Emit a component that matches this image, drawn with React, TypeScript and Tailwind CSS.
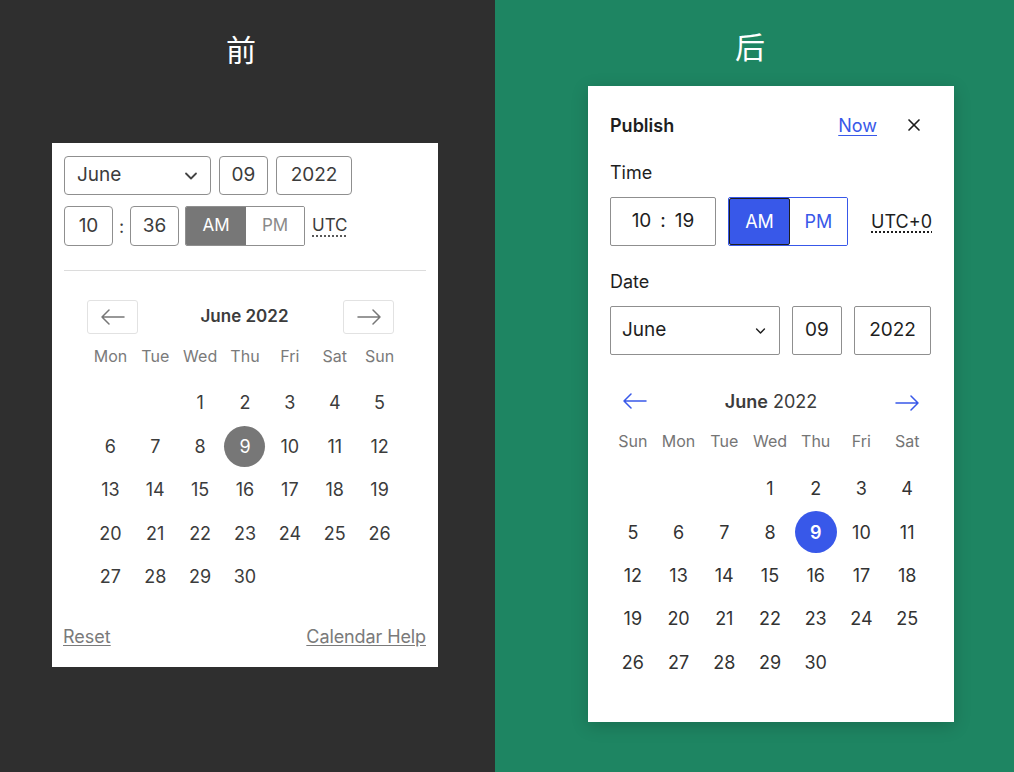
import React from 'react';
import { X } from 'lucide-react';

const leftWeek = ['Mon', 'Tue', 'Wed', 'Thu', 'Fri', 'Sat', 'Sun'];
const rightWeek = ['Sun', 'Mon', 'Tue', 'Wed', 'Thu', 'Fri', 'Sat'];

function cells(offset: number) {
  const out: (number | null)[] = [];
  for (let i = 0; i < offset; i++) out.push(null);
  for (let d = 1; d <= 30; d++) out.push(d);
  return out;
}

function Arrow({ dir, className }: { dir: 'left' | 'right'; className?: string }) {
  return (
    <svg width="26" height="16" viewBox="0 0 26 16" fill="none" className={className}>
      {dir === 'left' ? (
        <path d="M24 8H2M9 1L2 8l7 7" stroke="currentColor" strokeWidth="1.5" strokeLinecap="round" strokeLinejoin="round" />
      ) : (
        <path d="M2 8h22M17 1l7 7-7 7" stroke="currentColor" strokeWidth="1.5" strokeLinecap="round" strokeLinejoin="round" />
      )}
    </svg>
  );
}

function Chevron({ className }: { className?: string }) {
  return (
    <svg width="14" height="10" viewBox="0 0 14 10" fill="none" className={className}>
      <path d="M2 2.5l5 5 5-5" stroke="currentColor" strokeWidth="1.8" strokeLinecap="round" strokeLinejoin="round" />
    </svg>
  );
}

function OldPicker() {
  const days = cells(2);
  return (
    <div className="ml-[52px] mt-[73px] w-[386px] h-[524px] bg-white px-3 pt-3 flex flex-col text-[#3c3c3c]">
      <div className="flex gap-2 h-10 pt-px">
        <div className="w-[147px] border border-[#8f8f8f] rounded-[4px] flex items-center justify-between pl-3 pr-3 text-[19px]">
          <span>June</span>
          <Chevron className="text-[#444]" />
        </div>
        <div className="w-[49px] border border-[#8f8f8f] rounded-[4px] flex items-center justify-center text-[19px]">09</div>
        <div className="w-[76px] border border-[#8f8f8f] rounded-[4px] flex items-center justify-center text-[19px]">2022</div>
      </div>
      <div className="flex items-center h-10 mt-[11px]">
        <div className="w-[49px] h-10 border border-[#8f8f8f] rounded-[4px] flex items-center justify-center text-[19px] pt-px">10</div>
        <span className="w-[17px] text-center text-[18px]">:</span>
        <div className="w-[49px] h-10 border border-[#8f8f8f] rounded-[4px] flex items-center justify-center text-[19px] pt-px">36</div>
        <div className="ml-[6px] flex h-10 border border-[#8f8f8f] rounded-[2px] overflow-hidden text-[17px]">
          <div className="w-[60px] bg-[#777777] text-white flex items-center justify-center">AM</div>
          <div className="w-[58px] bg-white text-[#8a8a8a] flex items-center justify-center">PM</div>
        </div>
        <span className="ml-[7px] text-[17px] underline decoration-dotted underline-offset-4">UTC</span>
      </div>
      <div className="mt-6 h-px bg-[#dcdcdc]" />
      <div className="ml-[24px] w-[314px] mt-[29px]">
        <div className="flex items-center h-[34px]">
          <div className="w-[51px] h-[34px] -ml-px border border-[#e2e2e2] rounded-[3px] flex items-center justify-center text-[#777]">
            <Arrow dir="left" />
          </div>
          <span className="flex-1 pl-[8px] text-center font-semibold text-[17px] text-[#3c3c3c]">June 2022</span>
          <div className="w-[51px] h-[34px] border border-[#e2e2e2] rounded-[3px] flex items-center justify-center text-[#777] mr-[8px]">
            <Arrow dir="right" />
          </div>
        </div>
        <div className="grid grid-cols-7 mt-[10px] h-6 items-center text-[16px] text-[#7a7a7a]">
          {leftWeek.map(w => (
            <div key={w} className="text-center">{w}</div>
          ))}
        </div>
        <div className="grid grid-cols-7 mt-[13px] text-[18px]">
          {days.map((d, i) => (
            <div key={i} className="h-[43.5px] flex items-center justify-center">
              {d === 9 ? (
                <span className="w-[41px] h-[41px] rounded-full bg-[#777777] text-white flex items-center justify-center">9</span>
              ) : (
                d
              )}
            </div>
          ))}
        </div>
      </div>
      <div className="mt-auto mb-[17px] flex justify-between text-[18px] text-[#7a7a7a] leading-[26px] -ml-px">
        <span className="underline underline-offset-2">Reset</span>
        <span className="underline underline-offset-2 tracking-[-0.1px]">Calendar Help</span>
      </div>
    </div>
  );
}

function NewPicker() {
  const days = cells(3);
  return (
    <div className="ml-[93px] mt-[19px] w-[366px] h-[636px] bg-white px-[22px] pt-6 shadow-[0_4px_16px_rgba(0,0,0,0.18)] text-[#1e1e1e]">
      <div className="flex items-center h-[30px]">
        <span className="font-semibold text-[18px] flex-1">Publish</span>
        <span className="text-[18px] text-[#3858e9] underline underline-offset-[3px] mr-[27px]">Now</span>
        <X size={20} strokeWidth={2} className="mr-[8px]" />
      </div>
      <div className="mt-[21px] h-6 leading-6 text-[18px]">Time</div>
      <div className="mt-3 flex items-center h-[49px]">
        <div className="w-[106px] h-[49px] border border-[#8f8f8f] rounded-[2px] flex items-center justify-center text-[19px] gap-[9px]">
          <span>10</span><span>:</span><span>19</span>
        </div>
        <div className="ml-3 flex h-[49px] border border-[#3858e9] rounded-[2px] overflow-hidden text-[18px]">
          <div className="w-[61px] bg-[#3858e9] text-white flex items-center justify-center border border-[#1e1e1e] rounded-[2px]">AM</div>
          <div className="w-[57px] bg-white text-[#3858e9] flex items-center justify-center">PM</div>
        </div>
        <span className="ml-auto text-[18px] underline decoration-dotted underline-offset-4">UTC+0</span>
      </div>
      <div className="mt-6 h-6 leading-6 text-[18px]">Date</div>
      <div className="mt-3 flex gap-3 h-[49px] text-[19px]">
        <div className="w-[170px] border border-[#8f8f8f] rounded-[2px] flex items-center justify-between pl-[11px] pr-[13px]">
          <span>June</span>
          <Chevron className="w-[11px] h-[8px]" />
        </div>
        <div className="w-[50px] border border-[#8f8f8f] rounded-[2px] flex items-center justify-center">09</div>
        <div className="w-[77px] border border-[#8f8f8f] rounded-[2px] flex items-center justify-center">2022</div>
      </div>
      <div className="mt-[30px] flex items-center justify-between h-8 px-[12px]">
        <Arrow dir="left" className="text-[#3858e9]" />
        <span className="text-[18px] text-[#3c3c3c]"><span className="font-semibold">June</span> 2022</span>
        <Arrow dir="right" className="text-[#3858e9] translate-y-[2px]" />
      </div>
      <div className="grid grid-cols-7 mt-[12px] h-6 items-center text-[16px] text-[#757575] pr-[2px]">
        {rightWeek.map(w => (
          <div key={w} className="text-center">{w}</div>
        ))}
      </div>
      <div className="grid grid-cols-7 mt-[14px] text-[18px] text-[#333] pr-[2px]">
        {days.map((d, i) => (
          <div key={i} className="h-[43.4px] flex items-center justify-center">
            {d === 9 ? (
              <span className="w-[42px] h-[42px] rounded-full bg-[#3858e9] text-white font-semibold flex items-center justify-center">9</span>
            ) : (
              d
            )}
          </div>
        ))}
      </div>
    </div>
  );
}

export default function App() {
  return (
    <div className="w-[1014px] h-[772px] flex overflow-hidden" style={{ fontFamily: 'Inter, "Noto Sans CJK SC", sans-serif' }}>
      <div className="w-[495px] h-full bg-[#2f2f2f] pt-[30px]">
        <div className="h-10 leading-10 text-center text-white text-[30px] pr-[13px]">前</div>
        <OldPicker />
      </div>
      <div className="w-[519px] h-full bg-[#1e8562] pt-[27px]">
        <div className="h-10 leading-10 text-center text-white text-[30px] pr-[9px]">后</div>
        <NewPicker />
      </div>
    </div>
  );
}
